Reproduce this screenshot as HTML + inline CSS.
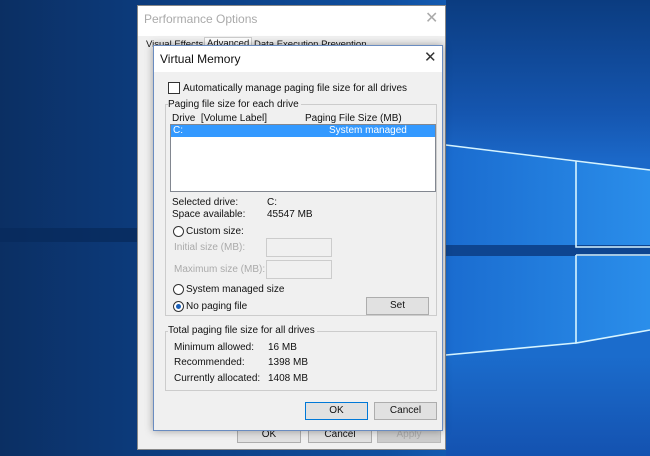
<!DOCTYPE html>
<html><head><meta charset="utf-8"><style>
*{margin:0;padding:0;box-sizing:border-box}
body{width:650px;height:456px;overflow:hidden;position:relative;font-family:"Liberation Sans",sans-serif;font-size:10px;color:#111;
background:linear-gradient(90deg,#0b2f63 0%,#0c3a7a 20%,#0f4fa0 60%,#1a6fd0 85%,#2a88e6 100%)}
.abs{position:absolute;white-space:nowrap}
.btn{position:absolute;background:#e1e1e1;border:1px solid #adadad;text-align:center;line-height:15px;font-size:10px}
.radio{position:absolute;width:11px;height:11px;border:1px solid #333;border-radius:50%;background:#fff}
.gray{color:#aaa}
.box{position:absolute;border:1px solid #ccc;background:#f0f0f0}
</style></head><body>
<svg class="abs" style="left:0;top:0" width="650" height="456">
<defs>
<linearGradient id="g" x1="0" y1="0" x2="1" y2="0"><stop offset="0" stop-color="#1a6cd0"/><stop offset="1" stop-color="#2c92ee"/></linearGradient>
<linearGradient id="v" x1="0" y1="0" x2="0" y2="1"><stop offset="0" stop-color="#0b3c80"/><stop offset=".25" stop-color="#1556b0"/><stop offset=".35" stop-color="#1b68c8"/><stop offset=".78" stop-color="#1b6ccc"/><stop offset="1" stop-color="#1452b0"/></linearGradient>
</defs>
<rect x="0" y="228" width="446" height="14" fill="#082a5c" opacity=".8"/>
<rect x="446" y="0" width="204" height="456" fill="url(#v)"/>
<polygon points="446,145 576,162 650,170 650,245 446,245" fill="url(#g)" opacity=".9"/>
<polygon points="446,256 650,256 650,330 576,343 446,355" fill="url(#g)" opacity=".9"/>
<rect x="446" y="245" width="204" height="11" fill="#0e4590"/>
<path d="M446,145 L576,161 L650,170 M576,161 V247 H650 M576,255 H650 M576,255 V343 L650,330 M446,355 L576,343" stroke="#d6f4ff" stroke-width="1.6" fill="none"/>
</svg>
<!-- outer dialog -->
<div class="abs" style="left:137px;top:5px;width:309px;height:445px;background:#f0f0f0;border:1px solid #888"></div>
<div class="abs" style="left:138px;top:6px;width:307px;height:30px;background:#fff"></div>
<div class="abs gray" style="left:144px;top:12px;font-size:12px">Performance Options</div>
<div class="abs gray" style="left:425px;top:8px;font-size:16px">✕</div>
<div class="abs" style="left:146px;top:39px;font-size:9.5px">Visual Effects</div>
<div class="abs" style="left:204px;top:37px;width:48px;height:14px;background:#fff;border:1px solid #ccc;font-size:9.5px;padding-left:2px">Advanced</div>
<div class="abs" style="left:254px;top:39px;font-size:9.5px">Data Execution Prevention</div>
<div class="btn" style="left:237px;top:426px;width:64px;height:17px">OK</div>
<div class="btn" style="left:308px;top:426px;width:64px;height:17px">Cancel</div>
<div class="btn gray" style="left:377px;top:426px;width:64px;height:17px;background:#ccc;border-color:#bbb">Apply</div>
<!-- virtual memory -->
<div class="abs" style="left:153px;top:45px;width:290px;height:386px;background:#f0f0f0;border:1px solid #6a8cc0;box-shadow:0 0 8px rgba(0,0,0,.35)"></div>
<div class="abs" style="left:154px;top:46px;width:288px;height:26px;background:#fff"></div>
<div class="abs" style="left:160px;top:52px;font-size:12px">Virtual Memory</div>
<div class="abs" style="left:424px;top:48px;font-size:15px;color:#333">✕</div>
<div class="abs" style="left:168px;top:82px;width:12px;height:12px;border:1px solid #333;background:#fff"></div>
<div class="abs" style="left:183px;top:83px">Automatically manage paging file size for all drives</div>
<div class="box" style="left:165px;top:104px;width:272px;height:212px;background:none"></div>
<div class="abs" style="left:168px;top:99px;background:#f0f0f0;padding-right:2px">Paging file size for each drive</div>
<div class="abs" style="left:172px;top:113px">Drive&nbsp; [Volume Label]</div>
<div class="abs" style="left:305px;top:113px">Paging File Size (MB)</div>
<div class="abs" style="left:170px;top:124px;width:266px;height:68px;background:#fff;border:1px solid #828790"></div>
<div class="abs" style="left:171px;top:125px;width:264px;height:12px;background:#3399ff;color:#fff;line-height:12px;padding-left:2px">C:<span style="position:absolute;left:158px">System managed</span></div>
<div class="abs" style="left:172px;top:197px">Selected drive:</div><div class="abs" style="left:267px;top:197px">C:</div>
<div class="abs" style="left:172px;top:209px">Space available:</div><div class="abs" style="left:267px;top:209px">45547 MB</div>
<div class="radio" style="left:173px;top:226px"></div><div class="abs" style="left:186px;top:226px">Custom size:</div>
<div class="abs gray" style="left:174px;top:242px">Initial size (MB):</div>
<div class="abs" style="left:266px;top:238px;width:66px;height:19px;border:1px solid #ccc"></div>
<div class="abs gray" style="left:174px;top:264px">Maximum size (MB):</div>
<div class="abs" style="left:266px;top:260px;width:66px;height:19px;border:1px solid #ccc"></div>
<div class="radio" style="left:173px;top:284px"></div><div class="abs" style="left:186px;top:284px">System managed size</div>
<div class="radio" style="left:173px;top:301px"><div style="position:absolute;left:2px;top:2px;width:5px;height:5px;border-radius:50%;background:#1a5fb8"></div></div>
<div class="abs" style="left:186px;top:301px">No paging file</div>
<div class="btn" style="left:366px;top:297px;width:63px;height:18px;line-height:16px">Set</div>
<div class="box" style="left:165px;top:331px;width:272px;height:60px;background:none"></div>
<div class="abs" style="left:168px;top:325px;background:#f0f0f0;padding-right:2px">Total paging file size for all drives</div>
<div class="abs" style="left:174px;top:342px">Minimum allowed:</div><div class="abs" style="left:268px;top:342px">16 MB</div>
<div class="abs" style="left:174px;top:357px">Recommended:</div><div class="abs" style="left:268px;top:357px">1398 MB</div>
<div class="abs" style="left:174px;top:373px">Currently allocated:</div><div class="abs" style="left:268px;top:373px">1408 MB</div>
<div class="btn" style="left:305px;top:402px;width:63px;height:18px;line-height:16px;border:1px solid #0078d7">OK</div>
<div class="btn" style="left:374px;top:402px;width:63px;height:18px;line-height:16px">Cancel</div>
</body></html>
